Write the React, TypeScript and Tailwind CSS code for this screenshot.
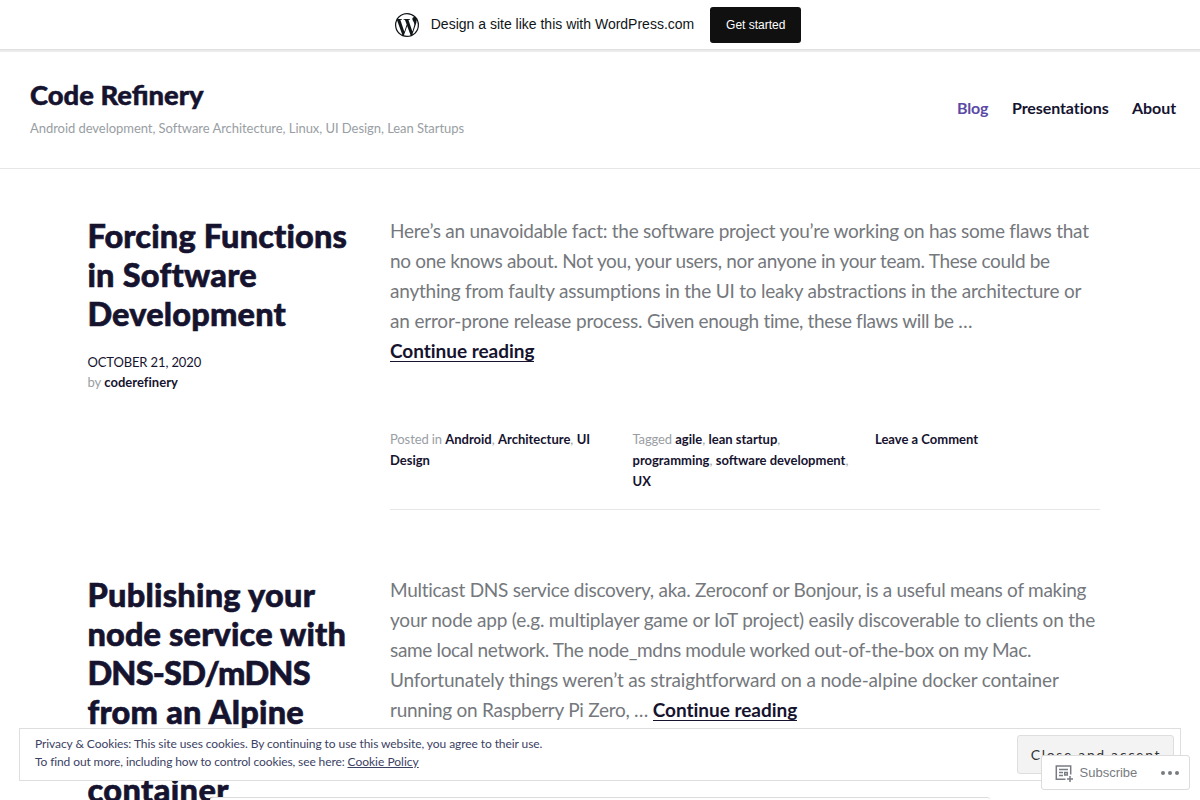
import React from 'react';

const navItems = ['Blog', 'Presentations', 'About'];

const MetaLinks: React.FC<{ label: string; items: string[] }> = ({ label, items }) => (
  <p className="w-[218px] text-[#9a9ea3]">
    <span className="tracking-[-0.11px]">{label} </span>
    {items.map((item, i) => (
      <React.Fragment key={item}>
        <a href="#" className="font-bold text-[#16132f]">{item}</a>
        {i < items.length - 1 && ', '}
      </React.Fragment>
    ))}
  </p>
);

const ContinueReading: React.FC = () => (
  <a href="#" className="font-bold tracking-[-0.03px] text-[#16132f] shadow-[inset_0_-1px_0_#16132f]">Continue reading</a>
);

const WordPressLogo: React.FC = () => (
  <svg viewBox="0 0 24 24" className="mr-[12px] size-6">
    <circle cx="12" cy="12" r="12" fill="#101517" />
    <path
      transform="translate(12 12) scale(1.2) translate(-12 -12)"
      fill="#fff"
      d="M12.158 12.786L9.46 20.625c.806.237 1.657.366 2.54.366 1.047 0 2.051-.181 2.986-.51l-.065-.124-2.763-7.571zM3.009 12c0 3.559 2.068 6.634 5.067 8.092L3.788 8.341A8.95 8.95 0 0 0 3.009 12zm15.06-.454c0-1.112-.399-1.881-.741-2.48-.456-.741-.883-1.368-.883-2.109 0-.826.627-1.596 1.51-1.596l.116.008A8.963 8.963 0 0 0 12 3.009a8.982 8.982 0 0 0-7.512 4.052l.578.015c.941 0 2.398-.114 2.398-.114.484-.028.542.684.057.741 0 0-.487.057-1.029.085l3.274 9.739 1.968-5.901-1.401-3.838c-.484-.028-.943-.085-.943-.085-.485-.029-.428-.769.057-.741 0 0 1.484.114 2.368.114.94 0 2.397-.114 2.397-.114.485-.028.543.684.057.741 0 0-.488.057-1.029.085l3.249 9.665.897-2.996c.456-1.169.684-2.137.684-2.911zm1.82-3.86c.039.286.06.593.06.924 0 .912-.171 1.938-.684 3.22l-2.746 7.94A8.98 8.98 0 0 0 20.991 12a8.922 8.922 0 0 0-1.102-4.314z"
    />
  </svg>
);

const Marketing: React.FC = () => (
  <div className="flex h-[52px] items-start justify-center border-b-2 border-[#ececec] font-['Liberation_Sans']">
    <div className="flex h-[50px] w-full items-start justify-center border-b border-[#dfdfdf] pt-[7px]">
      <div className="mr-[4px] flex h-9 items-center">
        <WordPressLogo />
        <span className="pb-0.5 text-sm leading-5 text-[#101517]">Design a site like this with WordPress.com</span>
        <a href="#" className="ml-4 flex h-9 w-[91px] items-center justify-center rounded-[3px] bg-[#101010] text-xs text-white">Get started</a>
      </div>
    </div>
  </div>
);

const Header: React.FC = () => (
  <header className="flex h-[117px] justify-between border-b border-[#e6e6e6] pl-[30px] pr-6">
    <div className="pt-[25px]">
      <h1 className="text-[27.4px] font-black leading-9 text-[#16132f] [-webkit-text-stroke:0.5px_#16132f]">Code Refinery</h1>
      <p className="mt-[5px] text-[13px] leading-5 tracking-[-0.05px] text-[#999ea3]">
        Android development, Software Architecture, Linux, UI Design, Lean Startups
      </p>
    </div>
    <nav className="flex gap-[23.5px] pt-[44px] text-[16px] font-bold leading-6 tracking-[-0.09px] text-[#16132f]">
      {navItems.map((item) => (
        <a key={item} href="#" className={item === 'Blog' ? 'text-[#5a4aa5]' : ''}>{item}</a>
      ))}
    </nav>
  </header>
);

const PostTitle: React.FC<{ children: React.ReactNode }> = ({ children }) => (
  <h2 className="whitespace-nowrap text-[32.5px] font-black leading-[39px] tracking-[0.25px] text-[#16132f] [-webkit-text-stroke:0.6px_#16132f]">
    {children}
  </h2>
);

const Posts: React.FC = () => (
  <main className="pl-[87px]">
    <article className="flex h-[359px] pt-[47px]">
      <div className="w-[303px] shrink-0 pl-[0.4px]">
        <PostTitle>
          <span className="tracking-[0.14px]">Forcing Functions</span><br />in Software<br />
          <span className="tracking-[0.18px]">Development</span>
        </PostTitle>
        <div className="mt-[19px] text-[13px] leading-5 text-[#9a9ea3]">
          <p className="tracking-[-0.12px] text-[#16132f]">OCTOBER 21, 2020</p>
          <p>by <a href="#" className="font-bold tracking-[0.03px] text-[#16132f]">coderefinery</a></p>
        </div>
      </div>
      <div className="h-[294px] w-[710px] border-b border-[#e6e6e6]">
        <p className="whitespace-nowrap text-[19px] leading-[30px] tracking-[-0.26px] text-[#75787d]">
          Here’s an unavoidable fact: the software project you’re working on has some flaws that<br />
          <span className="tracking-[-0.335px]">no one knows about. Not you, your users, nor anyone in your team. These could be</span><br />
          <span className="tracking-[-0.215px]">anything from faulty assumptions in the UI to leaky abstractions in the architecture or</span><br />
          <span className="tracking-[-0.17px]">an error-prone release process. </span>
          <span className="tracking-[-0.34px]">Given enough time, these flaws will be …</span><br />
          <ContinueReading />
        </p>
        <div className="mt-[63px] flex gap-[24.5px] text-[13px] leading-[21px]">
          <MetaLinks label="Posted in" items={['Android', 'Architecture', 'UI Design']} />
          <MetaLinks label="Tagged" items={['agile', 'lean startup', 'programming', 'software development', 'UX']} />
          <a href="#" className="font-bold text-[#16132f]">Leave a Comment</a>
        </div>
      </div>
    </article>
    <article className="flex pt-[47px]">
      <div className="w-[303px] shrink-0 pl-[0.4px]">
        <PostTitle>
          Publishing your<br />
          <span className="tracking-[0.15px]">node service with</span><br />
          <span className="tracking-[-0.8px]">DNS-SD/mDNS</span><br />
          from an Alpine<br />docker<br />
          <span className="tracking-[0.4px]">container</span>
        </PostTitle>
      </div>
      <p className="whitespace-nowrap text-[19px] leading-[30px] tracking-[-0.26px] text-[#75787d]">
        <span className="tracking-[-0.27px]">Multicast DNS service discovery, aka. Zeroconf or Bonjour, is a useful means of making</span><br />
        <span className="tracking-[-0.21px]">your node app (e.g. multiplayer game or IoT project) easily discoverable to clients on the</span><br />
        <span className="tracking-[-0.34px]">same local network. The node_mdns module worked out-of-the-box on my Mac.</span><br />
        <span className="tracking-[-0.18px]">Unfortunately things weren’t as straightforward on a node-alpine docker container</span><br />
        running on Raspberry Pi Zero, … <ContinueReading />
      </p>
    </article>
  </main>
);

const CookieBanner: React.FC = () => (
  <div className="absolute left-[19px] top-[728px] flex h-[53px] w-[1162px] justify-between border border-[#dedede] bg-white pl-[15px] pr-[6px] pt-[6px]">
    <p className="text-xs leading-[18px] tracking-[-0.08px] text-[#3c4264]">
      Privacy &amp; Cookies: This site uses cookies. By continuing to use this website, you agree to their use.<br />
      <span className="tracking-[-0.11px]">To find out more, including how to control cookies, see here: </span>
      <a href="#" className="tracking-[0px] underline">Cookie Policy</a>
    </p>
    <button className="h-[39px] w-[157px] rounded-[3px] border border-[#dedede] bg-[#f3f3f3] pl-px text-[14px] tracking-[1.65px] text-[#333]">
      Close and accept
    </button>
  </div>
);

const SubscribeBar: React.FC = () => (
  <div className="absolute left-[1041px] top-[755px] flex h-[35px] w-[149px] items-center rounded-[3px] border border-[#dcdcde] bg-white pl-3 font-['Liberation_Sans'] text-[13px] text-[#787c82]">
    <svg viewBox="0 0 20 20" className="mr-[5.5px] size-5" fill="none" stroke="currentColor" strokeWidth="1.5">
      <path d="M11.5 16.2H2.3V3h14.4v8.5M5 6.5h9M5 9.5h4M5 12.5h4M10.7 9.5h2.6v2.6h-2.6zM16 13v6M13 16h6" />
    </svg>
    Subscribe
    <svg viewBox="0 0 18 4" className="ml-[23.5px] h-1 w-[18px]" fill="currentColor">
      <circle cx="2" cy="2" r="2" />
      <circle cx="9" cy="2" r="2" />
      <circle cx="16" cy="2" r="2" />
    </svg>
  </div>
);

const App: React.FC = () => (
  <div className="relative h-[800px] w-[1200px] overflow-hidden bg-white font-['Lato',sans-serif]">
    <Marketing />
    <Header />
    <Posts />
    <div className="absolute left-[210px] top-[797px] h-[3px] w-[780px] rounded-t-[3px] border-t border-[#dcdcde] bg-white" />
    <CookieBanner />
    <SubscribeBar />
  </div>
);

export default App;
